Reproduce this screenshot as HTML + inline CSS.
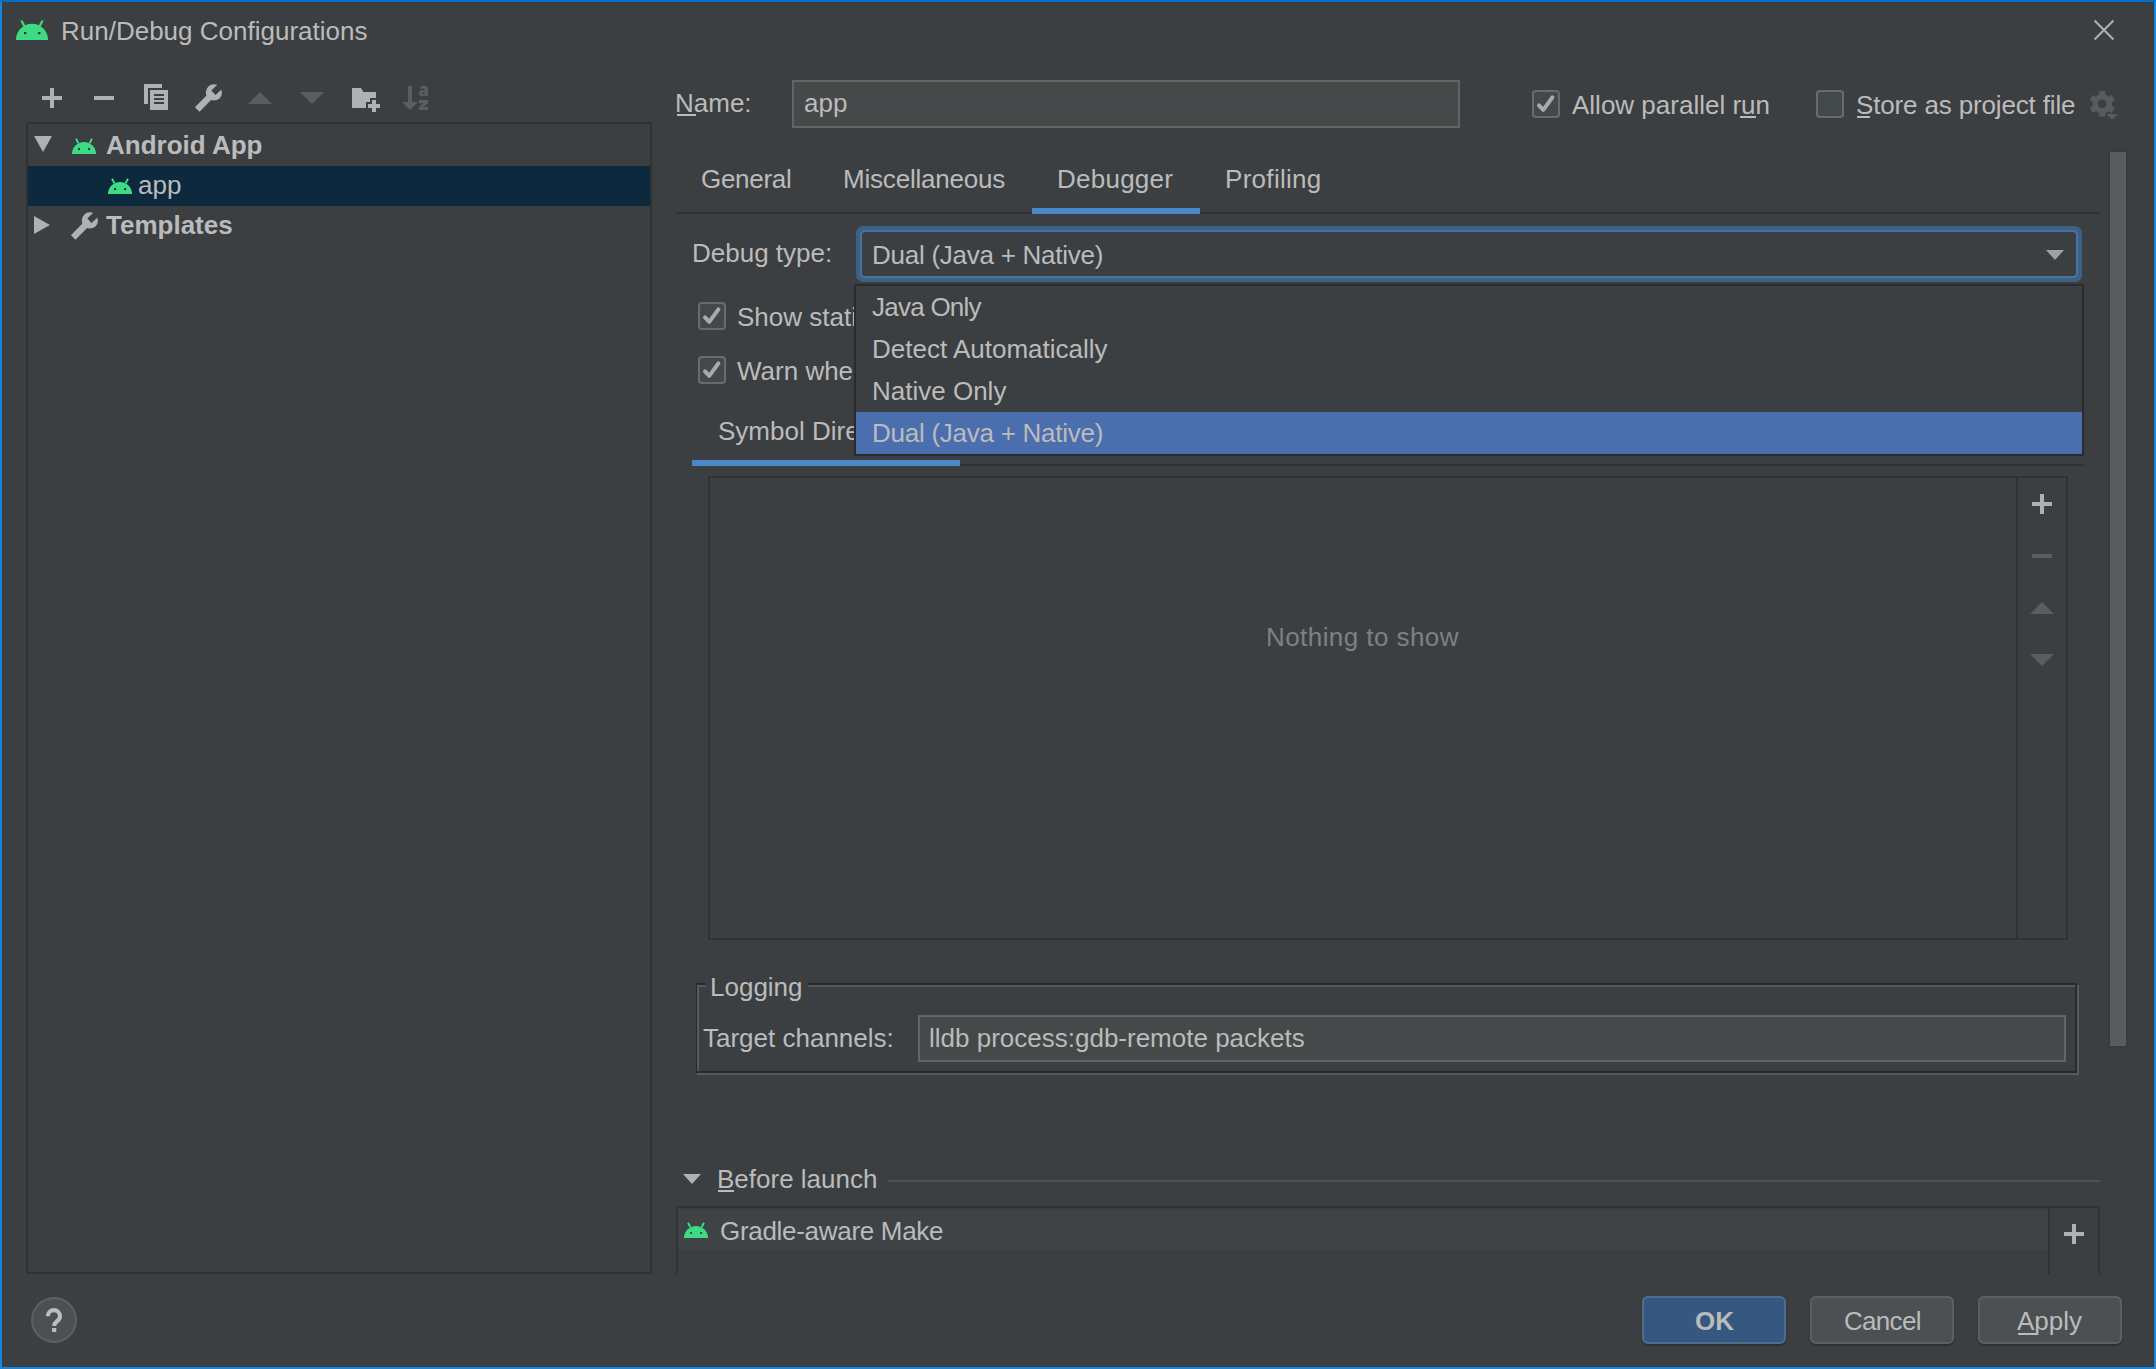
<!DOCTYPE html>
<html><head><meta charset="utf-8">
<style>
html,body{margin:0;padding:0;}
body{width:2156px;height:1369px;overflow:hidden;background:#1686DE;position:relative;font-family:"Liberation Sans",sans-serif;color:#BBBBBB;}
.a{position:absolute;box-sizing:border-box;}
.t{position:absolute;font-size:26px;line-height:30px;white-space:nowrap;}
.b{font-weight:bold;}
.ul{position:absolute;height:2px;background:#BBBBBB;}
svg{position:absolute;overflow:visible;}
</style></head><body>
<div class="a" style="left:0;top:0;width:2156px;height:2px;background:#0070CC;"></div>
<div class="a" style="left:2px;top:2px;width:2152px;height:1365px;background:#3C3F41;border:1px solid #3F3B38;"></div>

<!-- title -->
<svg style="left:16px;top:20px" width="32" height="20" viewBox="0 0 32 20"><g fill="#3DDC84"><path d="M0 20A16 16.2 0 0 1 32 20Z"/></g><g stroke="#3DDC84" stroke-width="2.1"><line x1="5.3" y1="0.6" x2="8.6" y2="6.6"/><line x1="26.7" y1="0.6" x2="23.4" y2="6.6"/></g><g fill="#2B2B2B"><rect x="8" y="12" width="2.2" height="2.2"/><rect x="22.2" y="12" width="2.2" height="2.2"/></g></svg>
<div class="t" style="left:61px;top:16px;">Run/Debug Configurations</div>
<svg style="left:2094px;top:20px" width="20" height="20"><g stroke="#AEAEAE" stroke-width="2.1"><line x1="0.5" y1="0.5" x2="19.5" y2="19.5"/><line x1="19.5" y1="0.5" x2="0.5" y2="19.5"/></g></svg>

<!-- toolbar -->
<svg style="left:0;top:0" width="440" height="120">
 <g fill="#AFB1B3">
  <rect x="50" y="88" width="4" height="20"/><rect x="42" y="96" width="20" height="4"/>
  <rect x="94" y="96" width="20" height="4"/>
  <path d="M144 84H162V88H148V104H144Z"/>
  <path d="M150 90H168V110H150Z"/>
 </g>
 <g fill="#3C3F41"><rect x="154" y="94" width="10" height="2"/><rect x="154" y="98" width="10" height="2"/><rect x="154" y="102" width="10" height="2"/></g>
 <g transform="translate(190,80)" fill="#AFB1B3">
  <defs><mask id="wm1"><rect x="-5" y="-5" width="50" height="50" fill="#fff"/><path d="M21.3 10.5L26.8 5.3L32.3 0.1L36.5 4.6L31.3 9.7L25.5 15Z" fill="#000"/></mask></defs>
  <g mask="url(#wm1)"><circle cx="23.9" cy="12.4" r="8.1"/><path d="M4.9 27.2L9.5 31.8L22.3 18.8L17.7 14.2Z"/></g>
 </g>
 <g fill="#5B5D5F">
  <path d="M248 104H272L260 92Z"/>
  <path d="M300 92H324L312 104Z"/>
 </g>
 <g transform="translate(345,80)">
  <path fill="#AFB1B3" d="M7 8H16L18.4 12H31V18H25V22H21V28H7Z"/>
  <path fill="#AFB1B3" d="M27 20H31V24H35V28H31V32H27V28H23V24H27Z"/>
  <g fill="#5B5D5F">
   <rect x="63" y="6" width="4" height="17"/><path d="M57 22H73L65 30Z"/>
   <path d="M74 20H83V23.2L78.4 26.8H83V30H74V26.8L78.6 23.2H74Z"/>
   <path d="M75.2 6.4C76.5 5.9 77.8 5.8 79 5.8C81.8 5.8 83 7.2 83 9.6V16H79.8V15.2C79.1 15.9 78.1 16.2 77.1 16.2C75.1 16.2 73.9 15 73.9 13.2C73.9 11.2 75.4 10.2 77.7 10.2H79.8V9.8C79.8 8.9 79.2 8.5 78.1 8.5C77.2 8.5 76.2 8.7 75.4 9ZM79.8 12.3H78.2C77.3 12.3 76.9 12.6 76.9 13.2C76.9 13.8 77.4 14.1 78 14.1C78.9 14.1 79.8 13.6 79.8 12.7Z"/>
  </g>
 </g>
</svg>

<!-- tree panel -->
<div class="a" style="left:26px;top:122px;width:626px;height:1152px;border:2px solid #2F3133;"></div>
<div class="a" style="left:28px;top:166px;width:622px;height:40px;background:#0D293E;"></div>
<svg style="left:34px;top:136px" width="18" height="16"><path d="M0 0H18L9 16Z" fill="#AFB1B3"/></svg>
<svg style="left:72px;top:138px" width="24" height="16" viewBox="0 0 32 20" preserveAspectRatio="none"><g fill="#3DDC84"><path d="M0 20A16 15 0 0 1 32 20Z"/></g><g stroke="#3DDC84" stroke-width="2.6"><line x1="5.3" y1="0.8" x2="8.6" y2="6.6"/><line x1="26.7" y1="0.8" x2="23.4" y2="6.6"/></g><g fill="#2B2B2B"><rect x="8.1" y="12.6" width="2.6" height="2.5"/><rect x="21.5" y="12.6" width="2.6" height="2.5"/></g></svg>
<div class="t b" style="left:106px;top:130px;">Android App</div>
<svg style="left:108px;top:178px" width="24" height="16" viewBox="0 0 32 20" preserveAspectRatio="none"><g fill="#3DDC84"><path d="M0 20A16 15 0 0 1 32 20Z"/></g><g stroke="#3DDC84" stroke-width="2.6"><line x1="5.3" y1="0.8" x2="8.6" y2="6.6"/><line x1="26.7" y1="0.8" x2="23.4" y2="6.6"/></g><g fill="#0D293E"><rect x="8.1" y="12.6" width="2.6" height="2.5"/><rect x="21.5" y="12.6" width="2.6" height="2.5"/></g></svg>
<div class="t" style="left:138px;top:170px;">app</div>
<svg style="left:34px;top:216px" width="16" height="18"><path d="M0 0V18L16 9Z" fill="#AFB1B3"/></svg>
<svg style="left:66px;top:208px" width="40" height="36">
 <defs><mask id="wm2"><rect x="-5" y="-5" width="50" height="50" fill="#fff"/><path d="M21.3 10.5L26.8 5.3L32.3 0.1L36.5 4.6L31.3 9.7L25.5 15Z" fill="#000"/></mask></defs>
 <g mask="url(#wm2)" fill="#AFB1B3"><circle cx="23.9" cy="12.4" r="8.1"/><path d="M4.9 27.2L9.5 31.8L22.3 18.8L17.7 14.2Z"/></g>
</svg>
<div class="t b" style="left:106px;top:210px;">Templates</div>

<!-- help -->
<div class="a" style="left:31px;top:1297px;width:46px;height:46px;border-radius:50%;background:#4C5052;border:2px solid #5E6060;"></div>
<svg style="left:40px;top:1304px" width="28" height="30"><path d="M7.8 12.2A6.1 6.1 0 0 1 20 12.2C20 15 18.3 16.3 16.6 17.6C15 18.9 14.2 19.6 14.2 22" fill="none" stroke="#BDBDBD" stroke-width="4.2"/><rect x="12.1" y="24" width="4.2" height="4.1" fill="#BDBDBD"/></svg>
<!-- name row -->
<div class="t" style="left:675px;top:88px;">Name:</div>
<div class="ul" style="left:677px;top:114px;width:19px;"></div>
<div class="a" style="left:792px;top:80px;width:668px;height:48px;background:#45494A;border:2px solid #646464;"></div>
<div class="t" style="left:804px;top:88px;">app</div>
<div class="a" style="left:1532px;top:90px;width:28px;height:28px;background:#43494A;border:2px solid #6B6B6B;border-radius:4px;"></div>
<svg style="left:1532px;top:90px" width="28" height="28"><path d="M7 15.4L11.3 19.9L20.4 7.3" fill="none" stroke="#A9A9A9" stroke-width="4" stroke-linecap="round" stroke-linejoin="round"/></svg>
<div class="t" style="left:1572px;top:90px;">Allow parallel run</div>
<div class="ul" style="left:1740px;top:116px;width:16px;"></div>
<div class="a" style="left:1816px;top:90px;width:28px;height:28px;background:#43494A;border:2px solid #6B6B6B;border-radius:4px;"></div>
<div class="t" style="left:1856px;top:90px;letter-spacing:-0.15px;">Store as project file</div>
<div class="ul" style="left:1857px;top:116px;width:13px;"></div>
<svg style="left:2082px;top:84px" width="44" height="40" viewBox="0 0 44 40">
 <defs><mask id="gm"><rect width="44" height="40" fill="#fff"/><circle cx="20.2" cy="19.9" r="4.4" fill="#000"/></mask></defs>
 <g fill="#5A5B5C" mask="url(#gm)"><g transform="translate(20.2,19.9)">
  <circle r="9.6"/>
  <rect x="-3.05" y="-12.7" width="6.1" height="6"/>
  <rect x="-3.05" y="-12.7" width="6.1" height="6" transform="rotate(60)"/>
  <rect x="-3.05" y="-12.7" width="6.1" height="6" transform="rotate(120)"/>
  <rect x="-3.05" y="-12.7" width="6.1" height="6" transform="rotate(180)"/>
  <rect x="-3.05" y="-12.7" width="6.1" height="6" transform="rotate(240)"/>
  <rect x="-3.05" y="-12.7" width="6.1" height="6" transform="rotate(300)"/>
 </g></g>
 <path d="M24.2 30.1H35.8L30 35.8Z" fill="#5A5B5C"/>
</svg>
<div class="a" style="left:2108px;top:150px;width:20px;height:898px;background:#5A5B5C;border:2px solid #3A3B3C;"></div>

<!-- tabs -->
<div class="t" style="left:701px;top:164px;letter-spacing:-0.3px;">General</div>
<div class="t" style="left:843px;top:164px;letter-spacing:-0.2px;">Miscellaneous</div>
<div class="t" style="left:1057px;top:164px;letter-spacing:0.25px;">Debugger</div>
<div class="t" style="left:1225px;top:164px;letter-spacing:0.3px;">Profiling</div>
<div class="a" style="left:676px;top:212px;width:1424px;height:2px;background:#2F3133;"></div>
<div class="a" style="left:1032px;top:208px;width:168px;height:6px;background:#4A88C7;"></div>

<!-- debug type -->
<div class="t" style="left:692px;top:238px;">Debug type:</div>
<div class="a" style="left:856px;top:226px;width:1226px;height:56px;border:6px solid #3D6185;border-radius:7px;background:#3C3F41;"></div>
<div class="a" style="left:860px;top:230px;width:1218px;height:48px;border:2px solid #4A72A0;border-radius:5px;"></div>
<div class="t" style="left:872px;top:240px;letter-spacing:-0.26px;">Dual (Java + Native)</div>
<svg style="left:2046px;top:250px" width="18" height="10"><path d="M0 0H18L9 10Z" fill="#9EA0A3"/></svg>

<!-- checkboxes -->
<div class="a" style="left:698px;top:302px;width:28px;height:28px;background:#43494A;border:2px solid #6B6B6B;border-radius:4px;"></div>
<svg style="left:698px;top:302px" width="28" height="28"><path d="M7 15.4L11.3 19.9L20.4 7.3" fill="none" stroke="#A9A9A9" stroke-width="4" stroke-linecap="round" stroke-linejoin="round"/></svg>
<div class="t" style="left:737px;top:302px;">Show static variables</div>
<div class="a" style="left:698px;top:356px;width:28px;height:28px;background:#43494A;border:2px solid #6B6B6B;border-radius:4px;"></div>
<svg style="left:698px;top:356px" width="28" height="28"><path d="M7 15.4L11.3 19.9L20.4 7.3" fill="none" stroke="#A9A9A9" stroke-width="4" stroke-linecap="round" stroke-linejoin="round"/></svg>
<div class="t" style="left:737px;top:356px;">Warn when debugging optimized code</div>
<div class="t" style="left:718px;top:416px;">Symbol Directories</div>
<div class="a" style="left:692px;top:464px;width:1392px;height:2px;background:#2F3133;"></div>
<div class="a" style="left:692px;top:460px;width:268px;height:6px;background:#4A88C7;"></div>

<!-- popup -->
<div class="a" style="left:854px;top:284px;width:1230px;height:172px;background:#3C3F41;border:2px solid #2B2B2B;"></div>
<div class="a" style="left:856px;top:412px;width:1226px;height:42px;background:#4B6EAF;"></div>
<div class="t" style="left:872px;top:292px;letter-spacing:-0.75px;">Java Only</div>
<div class="t" style="left:872px;top:334px;">Detect Automatically</div>
<div class="t" style="left:872px;top:376px;">Native Only</div>
<div class="t" style="left:872px;top:418px;letter-spacing:-0.26px;">Dual (Java + Native)</div>
<!-- table -->
<div class="a" style="left:708px;top:476px;width:1360px;height:464px;border:2px solid #313335;"></div>
<div class="a" style="left:2016px;top:478px;width:2px;height:460px;background:#313335;"></div>
<div class="t" style="left:1266px;top:622px;color:#808080;letter-spacing:0.43px;">Nothing to show</div>
<svg style="left:2030px;top:490px" width="26" height="180">
 <g fill="#AFB1B3"><rect x="10" y="4" width="4" height="20"/><rect x="2" y="12" width="20" height="4"/></g>
 <g fill="#5B5D5F"><rect x="2" y="64" width="20" height="4"/><path d="M0 124H24L12 112Z"/><path d="M0 164H24L12 176Z"/></g>
</svg>

<!-- logging -->
<div class="a" style="left:697px;top:985px;width:1382px;height:90px;border:2px solid #555A5E;"></div>
<div class="a" style="left:696px;top:983px;width:1381px;height:90px;border:2px solid #292A2C;border-left-width:1px;"></div>
<div class="a" style="left:706px;top:980px;width:102px;height:10px;background:#3C3F41;"></div>
<div class="t" style="left:710px;top:972px;">Logging</div>
<div class="t" style="left:703px;top:1023px;">Target channels:</div>
<div class="a" style="left:918px;top:1015px;width:1148px;height:47px;background:#45494A;border:2px solid #646464;"></div>
<div class="t" style="left:929px;top:1023px;">lldb process:gdb-remote packets</div>

<!-- before launch -->
<svg style="left:683px;top:1174px" width="18" height="10"><path d="M0 0H18L9 10Z" fill="#AFB1B3"/></svg>
<div class="t" style="left:717px;top:1164px;">Before launch</div>
<div class="ul" style="left:718px;top:1190px;width:16px;"></div>
<div class="a" style="left:888px;top:1180px;width:1212px;height:2px;background:#515151;"></div>
<div class="a" style="left:678px;top:1210px;width:1370px;height:40px;background:#404346;"></div>
<div class="a" style="left:676px;top:1206px;width:1424px;height:2px;background:#313335;"></div>
<div class="a" style="left:676px;top:1206px;width:2px;height:68px;background:#313335;"></div>
<div class="a" style="left:2048px;top:1206px;width:2px;height:68px;background:#313335;"></div>
<div class="a" style="left:2098px;top:1206px;width:2px;height:68px;background:#313335;"></div>
<svg style="left:684px;top:1222px" width="24" height="16" viewBox="0 0 32 20" preserveAspectRatio="none"><g fill="#3DDC84"><path d="M0 20A16 15 0 0 1 32 20Z"/></g><g stroke="#3DDC84" stroke-width="2.6"><line x1="5.3" y1="0.8" x2="8.6" y2="6.6"/><line x1="26.7" y1="0.8" x2="23.4" y2="6.6"/></g><g fill="#404346"><rect x="8.1" y="12.6" width="2.6" height="2.5"/><rect x="21.5" y="12.6" width="2.6" height="2.5"/></g></svg>
<div class="t" style="left:720px;top:1216px;letter-spacing:-0.3px;">Gradle-aware Make</div>
<svg style="left:2064px;top:1224px" width="20" height="20"><g fill="#AFB1B3"><rect x="8" y="0" width="4" height="20"/><rect x="0" y="8" width="20" height="4"/></g></svg>

<!-- buttons -->
<div class="a" style="left:1642px;top:1296px;width:144px;height:48px;background:#365880;border:2px solid #4C708C;border-radius:6px;box-shadow:0 2px 2px rgba(0,0,0,0.25);"></div>
<div class="t b" style="left:1695px;top:1306px;">OK</div>
<div class="a" style="left:1810px;top:1296px;width:144px;height:48px;background:#4C5052;border:2px solid #5E6060;border-radius:6px;box-shadow:0 2px 2px rgba(0,0,0,0.25);"></div>
<div class="t" style="left:1844px;top:1306px;letter-spacing:-0.7px;">Cancel</div>
<div class="a" style="left:1978px;top:1296px;width:144px;height:48px;background:#4C5052;border:2px solid #5E6060;border-radius:6px;box-shadow:0 2px 2px rgba(0,0,0,0.25);"></div>
<div class="t" style="left:2017px;top:1306px;">Apply</div>
<div class="ul" style="left:2018px;top:1333px;width:18px;"></div>
<!--END-->
</body></html>
